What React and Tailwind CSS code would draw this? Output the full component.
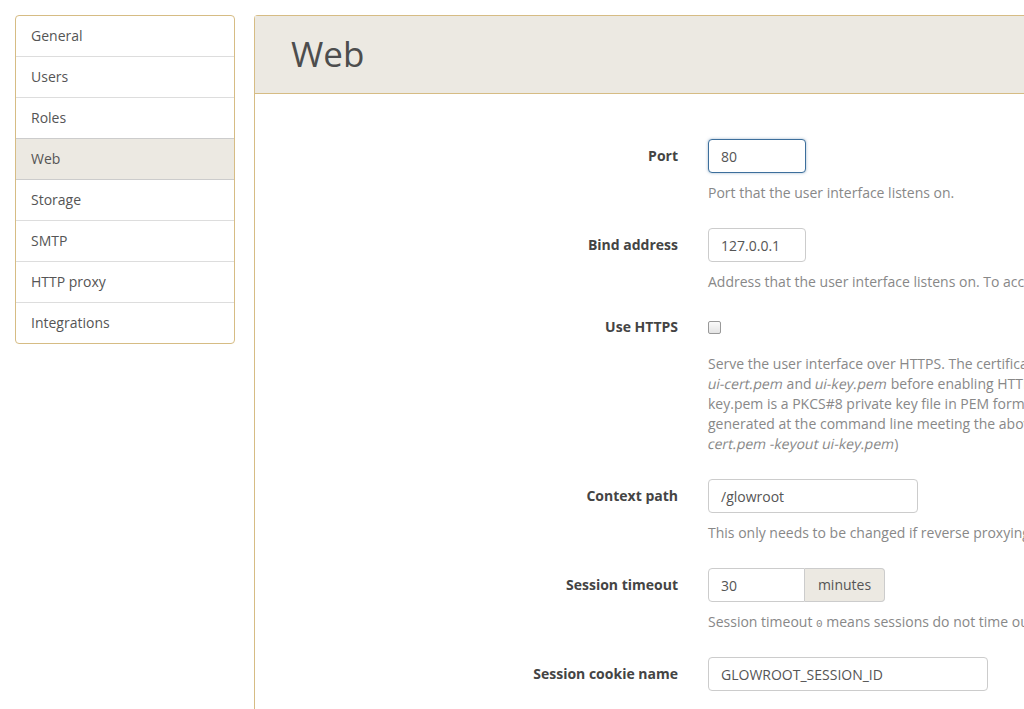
import React from "react";

const items = ["General", "Users", "Roles", "Web", "Storage", "SMTP", "HTTP proxy", "Integrations"];

function Row({ label, children, help }) {
  return (
    <div className="flex mb-[15px]">
      <div className="w-[423px] shrink-0 text-right font-bold text-[#444] leading-5 pt-[7px]">{label}</div>
      <div className="ml-[30px] flex-1">
        {children}
        {help}
      </div>
    </div>
  );
}

function Input({ value, w, focus = false }) {
  return (
    <div
      className={`h-[34px] rounded-[4px] border px-3 flex items-center text-[14px] text-[#555] bg-white ${
        focus ? "border-[#3d6f9c] shadow-[0_0_3px_rgba(61,111,156,0.5)]" : "border-[#ccc]"
      }`}
      style={{ width: w }}
    >
      {value}
    </div>
  );
}

function Help({ children }) {
  return <div className="mt-[10px] mb-[10px] h-5 text-[#888] leading-5 whitespace-nowrap">{children}</div>;
}

function Em({ children }) {
  return <span className="inline-block -skew-x-12">{children}</span>;
}

export default function App() {
  return (
    <div
      className="w-[1024px] h-[709px] overflow-hidden bg-white text-[14px] text-[#555]"
      style={{ fontFamily: '"Open Sans", "Noto Sans", sans-serif' }}
    >
      <div className="flex items-start pt-[15px] pl-[15px] gap-[19px]">
        <div className="w-[220px] shrink-0 border border-[#d6bc84] rounded-[4px] overflow-hidden">
          {items.map((it, i) => (
            <div
              key={it}
              className={`px-[15px] flex items-center leading-5 text-[#555] ${
                i > 0 ? "h-[41px] border-t" : "h-[40px]"
              } ${
                it === "Web"
                  ? "bg-[#ece9e2] border-[#ccc]"
                  : it === "Storage"
                  ? "border-[#ccc]"
                  : "border-[#ddd]"
              }`}
            >
              {it}
            </div>
          ))}
        </div>
        <div className="w-[1000px] shrink-0 border-l border-t border-[#d6bc84] rounded-tl-[4px] min-h-[720px]">
          <div className="h-[78px] bg-[#ece9e2] border-b border-[#d6bc84] flex items-center pl-[36px]">
            <h1 className="text-[35px] font-normal text-[#4d4d4d] leading-none pb-[2px]">Web</h1>
          </div>
          <div className="pt-[45px]">
            <Row label="Port" help={<Help>Port that the user interface listens on.</Help>}>
              <Input value="80" w={98} focus />
            </Row>
            <Row
              label="Bind address"
              help={
                <Help>
                  Address that the user interface listens on. To access the user interface from remote machines, set this to 0.0.0.0
                </Help>
              }
            >
              <Input value="127.0.0.1" w={98} />
            </Row>
            <div className="flex mb-[15px]">
              <div className="w-[423px] shrink-0 text-right font-bold text-[#444] leading-5">Use HTTPS</div>
              <div className="ml-[30px] flex-1">
                <div className="h-[27px] pt-[4px]">
                  <div className="w-[13px] h-[13px] rounded-[2px] border border-[#999] bg-gradient-to-b from-[#fafafa] to-[#e4e4e4]" />
                </div>
                <div className="mt-[10px] mb-[10px] text-[#888] leading-5 whitespace-nowrap">
                  <div>Serve the user interface over HTTPS. The certificate and private key to be used must be placed in the glowroot directory with filenames</div>
                  <div>
                    <Em>ui-cert.pem</Em> and <Em>ui-key.pem</Em> before enabling HTTPS. <Em>ui-</Em>
                  </div>
                  <div>key.pem is a PKCS#8 private key file in PEM format. A self-signed certificate can be</div>
                  <div>generated at the command line meeting the above requirements (e.g. openssl req -new -x509 -nodes -days 365 -out ui-</div>
                  <div>
                    <Em>cert.pem -keyout ui-key.pem</Em>)
                  </div>
                </div>
              </div>
            </div>
            <Row
              label="Context path"
              help={<Help>This only needs to be changed if reverse proxying the user interface behind a non-root context path.</Help>}
            >
              <Input value="/glowroot" w={210} />
            </Row>
            <Row
              label="Session timeout"
              help={
                <Help>
                  Session timeout{" "}
                  <span className="text-[11px] leading-none text-[#888]" style={{ fontFamily: '"Liberation Mono", monospace' }}>
                    0
                  </span>{" "}
                  means sessions do not time out (except on jvm restart in which case all users will need to login again).
                </Help>
              }
            >
              <div className="flex w-[177px]">
                <div className="h-[34px] w-[97px] rounded-l-[4px] border border-[#ccc] px-3 flex items-center bg-white">30</div>
                <div className="h-[34px] w-[80px] rounded-r-[4px] border border-l-0 border-[#ccc] bg-[#ece9e2] flex items-center justify-center text-[#555] pb-[1px]">
                  minutes
                </div>
              </div>
            </Row>
            <Row label="Session cookie name">
              <Input value="GLOWROOT_SESSION_ID" w={280} />
            </Row>
          </div>
        </div>
      </div>
    </div>
  );
}
